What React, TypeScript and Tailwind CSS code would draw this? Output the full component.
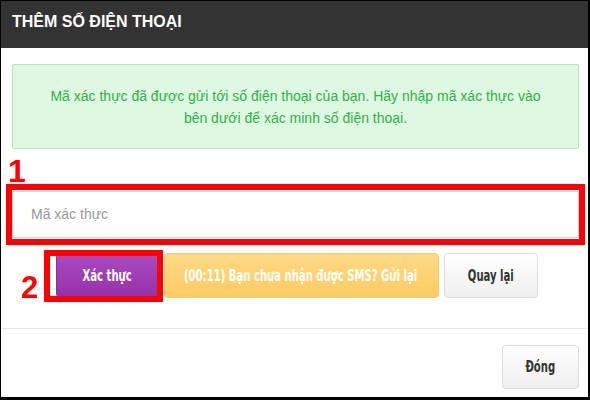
import React from "react";

const cond = {
  fontFamily: '"DejaVu Sans Condensed", "DejaVu Sans", sans-serif',
};

function BtnText({ children }: { children: React.ReactNode }) {
  return (
    <span className="inline-block shrink-0 whitespace-nowrap scale-x-[0.7] font-bold text-[16px]" style={cond}>
      {children}
    </span>
  );
}

export default function App() {
  return (
    <div
      className="relative w-[590px] h-[400px] bg-white border-t border-l border-r-2 border-b-[3px] border-black flex flex-col overflow-hidden"
      style={{ fontFamily: '"Liberation Sans", Arial, sans-serif' }}
    >
      <div className="h-[47px] bg-[#333333] px-[11px] pt-[10px] shrink-0">
        <div className="text-white text-[16px] font-bold leading-[21px]">THÊM SỐ ĐIỆN THOẠI</div>
      </div>

      <div className="pl-[11px] pr-[9px] pt-4">
        <div className="bg-[#dff9e1] border border-[#b3e7b6] rounded-[2px] pt-[20px] pb-[19px] px-4 text-center text-[14px] leading-[22px] text-[#2eb14c]">
          Mã xác thực đã được gửi tới số điện thoại của bạn. Hãy nhập mã xác thực vào
          <br />
          bên dưới để xác minh số điện thoại.
        </div>

        <div className="mt-[42px] h-[47px] border border-[#d6d6d6] bg-white flex items-center pl-[18px] text-[14px] text-[#999999]">
          Mã xác thực
        </div>

        <div className="mt-[15px] flex justify-center gap-[5px] pl-[2px]">
          <button className="w-[103px] h-[45px] rounded-[4px] border border-[#8c2c9e] bg-gradient-to-b from-[#aa4bbf] to-[#9531a8] text-white flex items-center justify-center overflow-visible">
            <BtnText>Xác thực</BtnText>
          </button>
          <button className="w-[275px] h-[45px] rounded-[4px] border border-[#f7c866] bg-gradient-to-b from-[#fed986] to-[#fdcb63] text-white flex items-center justify-center overflow-visible">
            <BtnText>(00:11) Bạn chưa nhận được SMS? Gửi lại</BtnText>
          </button>
          <button className="w-[94px] h-[45px] rounded-[4px] border border-[#dddddd] bg-gradient-to-b from-[#ffffff] to-[#efefef] text-[#333333] flex items-center justify-center overflow-visible">
            <BtnText>Quay lại</BtnText>
          </button>
        </div>
      </div>

      <div className="mt-[30px] border-t border-[#e5e5e5] pt-4 pr-[9px] flex justify-end">
        <button className="w-[77px] h-[44px] rounded-[4px] border border-[#dddddd] bg-gradient-to-b from-[#ffffff] to-[#efefef] text-[#333333] flex items-center justify-center overflow-visible">
          <BtnText>Đóng</BtnText>
        </button>
      </div>

      {/* annotations */}
      <div className="absolute left-[5px] top-[183px] w-[579px] h-[61px] border-[6px] border-[#ff0000]" />
      <div className="absolute left-[43px] top-[249px] w-[119px] h-[52px] border-[6px] border-[#ff0000]" />
      <span className="absolute left-[7px] top-[154px] text-[32px] leading-none font-bold text-[#ff0000]">1</span>
      <span className="absolute left-[20px] top-[271px] text-[31px] leading-none font-bold text-[#ff0000]">2</span>
    </div>
  );
}
